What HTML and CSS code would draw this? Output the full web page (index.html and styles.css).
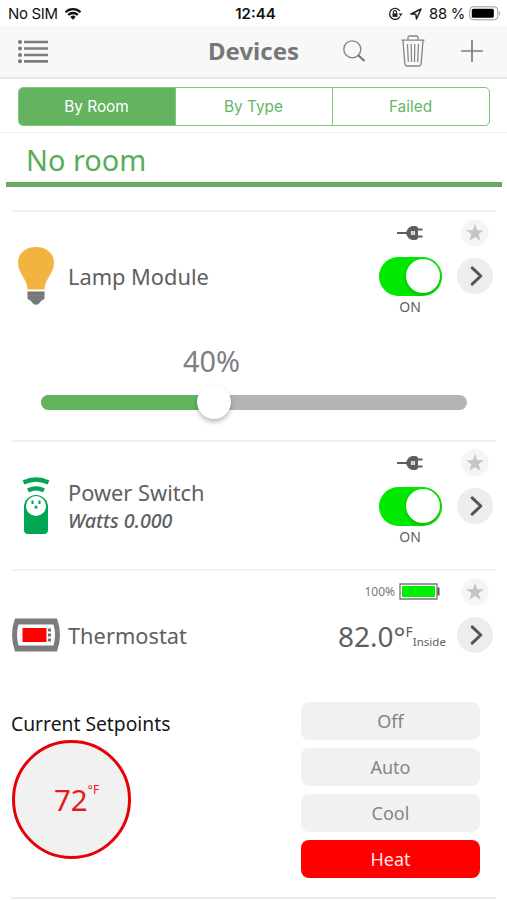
FILE: index.html
```html
<!DOCTYPE html>
<html lang="en">
<head>
<meta charset="utf-8">
<title>Devices</title>
<link rel="stylesheet" href="styles.css">
</head>
<body>
<svg class="defs" width="0" height="0">
  <symbol id="plug" viewBox="0 0 28 18"><path d="M1 9h12M20 5.500h6.500M20 12.500h6.500" stroke="#5f5f5f" stroke-width="2.200" fill="none"/><path d="M10.500 7.500c1.500-4 4-5.500 7-5.500 2.500 0 4.500.5 4.500 2v10c0 1.500-2 2-4.500 2-3 0-5.500-1.500-7-5.500z" fill="#5f5f5f"/><path d="M15 7h4v4h-4z" fill="#eee"/><path d="M17 7v4" stroke="#888" stroke-width=".8"/></symbol>
  <symbol id="star" viewBox="0 0 28 28"><circle cx="14" cy="14" r="13.700" fill="#f5f5f5"/><path d="M14 5l2.200 6.200h6.600l-5.200 4 1.900 6.500L14 17.900l-5.500 3.800 1.900-6.500-5.200-4h6.600z" fill="#c5c5c5"/></symbol>
  <symbol id="go" viewBox="0 0 36 36"><circle cx="18" cy="18" r="18" fill="#eeedec"/><path d="M15.200 9.800l8.600 8.200-8.600 8.200" fill="none" stroke="#555" stroke-width="3" stroke-linecap="round" stroke-linejoin="round"/></symbol>
</svg>

<div class="status">
  <div class="status-left">
    <span class="carrier">No SIM</span>
    <svg width="18" height="14" viewBox="0 0 18 14"><path d="M1.500 5.200a10.600 10.600 0 0 1 15 0M4.200 8a6.800 6.800 0 0 1 9.600 0" fill="none" stroke="#111" stroke-width="2.300"/><path d="M9 12.700l-2.700-2.800a3.900 3.900 0 0 1 5.400 0z" fill="#111"/></svg>
  </div>
  <span class="clock">12:44</span>
  <div class="status-right">
    <svg class="lock" width="15" height="14" viewBox="0 0 15 14"><path d="M11.800 4A5.500 5.500 0 1 0 12 9.500" fill="none" stroke="#222" stroke-width="1.300"/><path d="M10.600 6.500h4l-2 2.700z" fill="#222"/><path d="M4.500 6.300h5v3.600h-5z" fill="#222"/><path d="M5.400 6.500V5.200a1.600 1.600 0 0 1 3.200 0v1.300" fill="none" stroke="#222" stroke-width="1.100"/></svg>
    <svg class="arrow" width="12" height="12" viewBox="0 0 12 12"><path d="M1 6l10-5-4.500 10-.7-4.800z" fill="none" stroke="#222" stroke-width="1.500" stroke-linejoin="round"/></svg>
    <span class="percent">88 %</span>
    <svg width="32" height="15" viewBox="0 0 32 15"><rect x=".8" y=".8" width="28" height="13" rx="3.500" fill="#fff" stroke="#999"/><rect x="2.800" y="2.800" width="22" height="9" rx="1.500"/><path d="M30 5q2 2.500 0 5z" fill="#999"/></svg>
  </div>
</div>

<header class="nav">
  <svg class="menu" width="31" height="25" viewBox="0 0 31 25"><g stroke="#7d7d7d" stroke-width="2.700"><path d="M6 3h24M6 9.500h24M6 16h24M6 22.300h24"/></g><g fill="#777"><circle cx="2" cy="3" r="2"/><circle cx="2" cy="9.500" r="2"/><circle cx="2" cy="16" r="2"/><circle cx="2" cy="22.300" r="2"/></g></svg>
  <h1>Devices</h1>
  <svg class="search" width="23" height="23" viewBox="0 0 23 23"><circle cx="9.300" cy="9.300" r="8.500" fill="none" stroke="#858585" stroke-width="1.300"/><path d="M15 15l6.500 6" stroke="#777" stroke-width="2.300"/></svg>
  <svg class="trash" width="24" height="32" viewBox="0 0 24 32" fill="none" stroke="#858585" stroke-width="1.300"><path d="M.5 5.200h23M7 5V2.500Q7 1 8.500 1h7Q17 1 17 2.500V5M2 5.500l1.800 23q.2 2.500 2.700 2.500h11q2.500 0 2.700-2.500L22 5.500"/><path d="M6.500 9l.8 18M10.200 9l.3 18M13.800 9l-.3 18M17.500 9l-.8 18" stroke-width="1.200"/></svg>
  <svg class="plus" width="22" height="22" viewBox="0 0 22 22"><path d="M11 0v22M0 11h22" stroke="#7d7d7d" stroke-width="1.700"/></svg>
</header>

<div class="filter">
  <div class="segments">
    <div class="segment active">By Room</div>
    <div class="segment">By Type</div>
    <div class="segment">Failed</div>
  </div>
</div>

<h2 class="room"><span>No room</span></h2>

<main>
  <section class="device lamp">
    <div class="summary">
      <div class="icon"><svg width="38" height="60" viewBox="0 0 38 60"><path d="M10.500 43.500C10 32 1 28 1 16.500 1 7 9 1 19 1s18 6 18 15.500C37 28 28 32 27.500 43.500z" fill="#f2b441"/><path d="M10.500 45.500h17v7c-2 2-4 2.500-5.500 5q-3 2.500-6 0c-1.500-2.500-3.500-3-5.500-5z" fill="#777"/><path d="M11 49.500h16M11 53h16" stroke="#8c8c8c" stroke-width=".6"/></svg></div>
      <div class="name">Lamp Module</div>
      <div class="state">
        <svg class="power" width="28" height="18"><use href="#plug"/></svg>
        <div class="toggle"><i></i></div>
        <span class="on">ON</span>
      </div>
      <div class="actions"><svg width="28" height="28"><use href="#star"/></svg><svg width="36" height="36"><use href="#go"/></svg></div>
    </div>
    <div class="level">40%</div>
    <div class="slider"><div class="fill"></div><div class="thumb"></div></div>
  </section>

  <section class="device switch">
    <div class="summary">
      <div class="icon"><svg width="28" height="58" viewBox="0 0 28 58"><path d="M1.500 5.500Q14-.5 26.500 5.500M6 13.300q8-4 16 0" fill="none" stroke="#00a651" stroke-width="4.300"/><path d="M2 30a12 12 0 0 1 24 0v23q0 4-4 4H6q-4 0-4-4z" fill="#00a651"/><circle cx="14" cy="29" r="10" fill="#fff"/><path d="M9.500 23.500h2v3.500h-2zM16.500 23.500h2v3.500h-2zM12.500 31.500v-1.500a1.500 1.500 0 0 1 3 0v1.500z" fill="#00a651"/></svg></div>
      <div class="name">Power Switch<em>Watts 0.000</em></div>
      <div class="state">
        <svg class="power" width="28" height="18"><use href="#plug"/></svg>
        <div class="toggle"><i></i></div>
        <span class="on">ON</span>
      </div>
      <div class="actions"><svg width="28" height="28"><use href="#star"/></svg><svg width="36" height="36"><use href="#go"/></svg></div>
    </div>
  </section>

  <section class="device thermostat">
    <div class="summary">
      <div class="icon"><svg width="50" height="34" viewBox="0 0 50 34"><path d="M4 .5h42q6 16.500 0 33H4q-6-16.500 0-33z" fill="#7c7c7c"/><path d="M7.500 6.500h35q3 10.500 0 21h-35q-3-10.500 0-21z" fill="#fff"/><path d="M11.500 10h24v14h-24z" fill="#f00"/><path d="M37 10.500h3v3h-3zM37 15.500h3v3h-3zM37 20.500h3v3h-3z" fill="#707070"/></svg></div>
      <div class="name">Thermostat</div>
      <div class="reading">
        <div class="battery"><span>100%</span><svg width="41" height="17" viewBox="0 0 41 17"><path d="M1 1h37v15H1z" fill="#fff" stroke="#777" stroke-width="1.300"/><path d="M39.500 4.500v8" stroke="#555" stroke-width="2"/><path d="M3 3h33v11H3z" fill="#00ef00"/></svg></div>
        <div class="temperature"><b>82.0°</b><sup>F</sup><sub>Inside</sub></div>
      </div>
      <div class="actions"><svg width="28" height="28"><use href="#star"/></svg><svg width="36" height="36"><use href="#go"/></svg></div>
    </div>
    <div class="controls">
      <div class="setpoints">
        <h3>Current Setpoints</h3>
        <div class="dial"><span>72</span><sup>°F</sup></div>
      </div>
      <div class="modes">
        <div class="mode">Off</div>
        <div class="mode">Auto</div>
        <div class="mode">Cool</div>
        <div class="mode heat">Heat</div>
      </div>
    </div>
  </section>
</main>
</body>
</html>
```
FILE: styles.css
```css
* { box-sizing: border-box; }
body { margin: 0; width: 507px; height: 900px; overflow: hidden; background: #fff; color: #606060; font-family: "Noto Sans", sans-serif; }
svg { display: block; flex: none; }
.defs { position: absolute; }
h1, h2, h3 { margin: 0; font-weight: 400; }

.status { height: 26px; padding: 1px 6px 0 9px; display: grid; grid-template-columns: 1fr auto 1fr; align-items: center; color: #111; font: 15px/24px Inter, sans-serif; }
.status-left, .status-right { display: flex; align-items: center; }
.status-left { gap: 6px; }
.status-right { justify-content: flex-end; }
.carrier { margin-left: -1px; letter-spacing: -.35px; }
.clock { font-weight: 600; letter-spacing: 0; padding-left: 1px; }
.arrow { margin: 0 7px 0 7px; }
.percent { margin-right: 4px; font-size: 14.800px; letter-spacing: -.25px; }

.nav { height: 53px; display: flex; align-items: center; padding: 0 24px 1px 18px; background: #f8f8f8; border-bottom: 2px solid #e9e9e9; }
.nav h1 { width: 92px; margin-left: 159px; color: #777; font-size: 24px; line-height: 48px; font-weight: 700; white-space: nowrap; }
.search { margin-left: 43px; }
.trash { margin-left: 35px; }
.plus { margin-left: auto; }

.filter { height: 54px; padding: 8px 17px 0 18px; border-bottom: 1px solid #f0f0f0; }
.segments { height: 39px; display: flex; border: 1.500px solid #7fc480; border-radius: 5px; overflow: hidden; }
.segment { flex: 1; padding-right: 1px; text-align: center; color: #65b566; font: 15.400px/38px Inter, sans-serif; }
.segment + .segment { border-left: 1px solid #7fc480; }
.segment.active { background: #64b35f; color: #fff; }

.room { height: 54px; margin: 0 5px 0 6px; padding-left: 20px; border-bottom: 5px solid #65a962; color: #57ad5a; font-size: 28.900px; line-height: 54px; }

main { margin: 23px 11px 0; }
.device { border-top: 2px solid #f1f1f1; }
.lamp { height: 230px; }
.switch { height: 129px; }
.thermostat { height: 330px; border-bottom: 2px solid #ececec; }
.summary { height: 128px; display: flex; }
.icon { width: 50px; height: 128px; display: flex; align-items: center; justify-content: center; }
.name { width: 240px; height: 128px; margin-left: 7px; display: flex; flex-direction: column; justify-content: center; font-size: 21.800px; line-height: 30px; }
.lamp .name, .thermostat .name { padding-top: 1px; }
.name em { font-size: 19.700px; font-weight: 500; line-height: 26px; }
.state { width: 64px; margin-left: 70px; display: flex; flex-direction: column; align-items: center; padding-top: 12px; }
.toggle { width: 63px; height: 39px; margin-top: 15px; padding: 2px; border-radius: 20px; background: #00e800; }
.toggle i { display: block; width: 34px; height: 34px; margin-left: 25px; border-radius: 50%; background: #fff; box-shadow: 0 2px 4px #0003; }
.on { margin-top: 2px; font-size: 14px; line-height: 18px; }
.actions { margin-left: 14px; width: 38px; display: flex; flex-direction: column; align-items: center; gap: 11px; padding-top: 7px; }

.level { margin-left: 172px; color: #808080; font-size: 28.900px; line-height: 44px; margin-top: -1px; }
.slider { display: flex; align-items: center; width: 426px; height: 15px; margin: 12px 0 0 30px; border-radius: 8px; background: #b4b4b4; }
.fill { width: 162px; height: 15px; border-radius: 8px 0 0 8px; background: #64b35f; }
.thumb { flex: none; width: 34px; height: 34px; margin: -2px 0 0 -6px; border-radius: 50%; background: #fff; box-shadow: 0 3px 5px #0004; }

.reading { width: 125px; margin-left: 23px; padding-top: 12px; }
.thermostat .name { width: 241px; }
.thermostat .actions { margin-left: -1px; }
.battery { display: flex; justify-content: flex-end; align-items: center; gap: 4px; margin-right: 17px; font-size: 12px; line-height: 17px; color: #777; }
.temperature { display: flex; margin: 14px 0 0 6px; white-space: nowrap; }
.temperature b { font-size: 28px; font-weight: 400; line-height: 44px; }
.temperature sup { font-size: 14px; line-height: 36px; }
.temperature sub { font-size: 11.500px; line-height: 56px; }

.controls { display: flex; justify-content: space-between; padding-right: 16px; margin-top: 3px; }
.setpoints { padding-top: 8px; }
.setpoints h3 { color: #171717; font-size: 19.300px; line-height: 27px; }
.dial { width: 119px; height: 119px; margin: 3px 0 0 1px; display: flex; padding-left: 39px; border: 3.500px solid #e60009; border-radius: 50%; background: #f1f1f1; color: #e51920; }
.dial span { font-size: 29.500px; line-height: 114px; }
.dial sup { font-size: 12px; line-height: 94px; }
.modes { width: 179px; display: grid; grid-auto-rows: 38px; gap: 8px; }
.mode { border-radius: 8px; background: #f1f1f1; color: #858585; font-size: 18px; line-height: 38px; text-align: center; }
.mode.heat { background: #f00; color: #ffe4e4; }
```
